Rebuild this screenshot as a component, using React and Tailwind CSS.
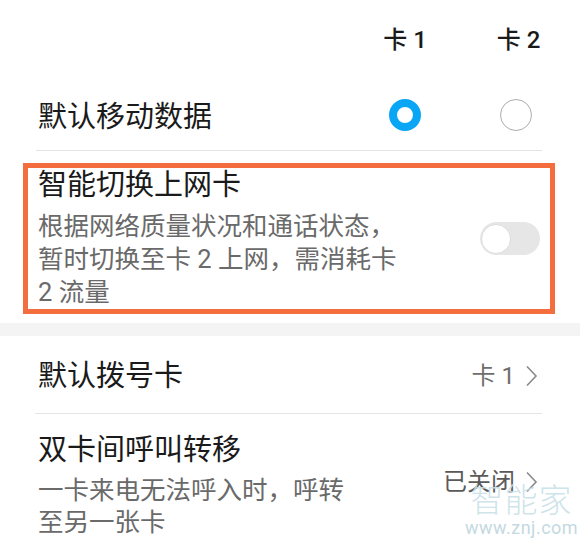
import React from 'react'

const font = { fontFamily: 'Roboto, "Noto Sans CJK SC", sans-serif' }

function Chevron() {
  return (
    <svg width="13" height="22" viewBox="0 0 13 22" className="shrink-0">
      <polyline points="2,1.5 11,11 2,20.5" fill="none" stroke="#8a8a8a" strokeWidth="1.6" />
    </svg>
  )
}

function Toggle() {
  return (
    <div className="relative w-[60px] h-[33px] rounded-full bg-[#e6e6e6] shrink-0">
      <div className="absolute left-[1px] top-[1.5px] w-[30px] h-[30px] rounded-full bg-white border border-[#dcdcdc]" />
    </div>
  )
}

export default function App() {
  return (
    <div className="relative w-[580px] h-[544px] overflow-hidden bg-white text-[#1a1a1a]" style={font}>
      {/* card header */}
      <div className="grid grid-cols-[1fr_72px_72px] gap-x-[39px] pl-[38px] pr-[28px] h-[80px] items-center">
        <span />
        <span className="text-center text-[24px] font-medium leading-none">卡 1</span>
        <span className="text-center text-[24px] font-medium leading-none pl-[5px]">卡 2</span>
      </div>

      {/* default data */}
      <div className="grid grid-cols-[1fr_72px_72px] gap-x-[39px] pl-[38px] pr-[28px] h-[70px] items-center">
        <span className="text-[29px] leading-[36px] pt-[4px]">默认移动数据</span>
        <div className="flex justify-center">
          <div className="w-[32px] h-[32px] rounded-full border-[8px] border-[#0aa6f6] bg-white" />
        </div>
        <div className="flex justify-center">
          <div className="w-[32px] h-[32px] rounded-full border-[1.5px] border-[#adadad] bg-white" />
        </div>
      </div>
      <div className="ml-[36px] mr-[38px] border-b border-[#e4e4e4]" />

      {/* smart switch, highlighted */}
      <div className="mt-[12px] ml-[23px] mr-[25px] border-[5px] border-[#f46d3e] flex items-center pl-[10px] pr-[10px]">
        <div className="flex-1">
          <div className="text-[29px] leading-[34px]">智能切换上网卡</div>
          <div className="mt-[8px] text-[25.5px] leading-[33px] text-[#6a6a6a] whitespace-nowrap">
            <div>根据网络质量状况和通话状态，</div>
            <div>暂时切换至卡 2 上网，需消耗卡</div>
            <div>2 流量</div>
          </div>
        </div>
        <Toggle />
      </div>

      <div className="mt-[9px] h-[13px] bg-[#f4f4f4]" />

      {/* default dial card */}
      <div className="flex items-center justify-between pl-[38px] pr-[42px] h-[77px] pt-[3px]">
        <span className="text-[29px] leading-[36px]">默认拨号卡</span>
        <div className="flex items-center gap-[10px] text-[24px] text-[#6e6e6e]">
          <span className="leading-none">卡 1</span>
          <Chevron />
        </div>
      </div>
      <div className="ml-[35px] mr-[38px] border-b border-[#e4e4e4]" />

      {/* call forwarding */}
      <div className="flex items-center justify-between pl-[38px] pr-[42px] pt-[18px]">
        <div>
          <div className="text-[29px] leading-[36px]">双卡间呼叫转移</div>
          <div className="mt-[6px] text-[25.5px] leading-[32px] text-[#6a6a6a] whitespace-nowrap">
            <div>一卡来电无法呼入时，呼转</div>
            <div>至另一张卡</div>
          </div>
        </div>
        <div className="flex items-center gap-[10px] text-[24px] text-[#5a5a5a] pb-[6px]">
          <span className="leading-none">已关闭</span>
          <Chevron />
        </div>
      </div>

      {/* watermark */}
      <div className="absolute left-[465px] top-[484px] flex flex-col items-center pointer-events-none">
        <span className="text-[33px] leading-[34px] tracking-[1px] font-light text-[#c9dfe7]/90">智能家</span>
        <span className="text-[18px] leading-[20px] tracking-[0.5px] text-[#c4d9e1]" style={{ fontFamily: 'Roboto, sans-serif' }}>www.znj.com</span>
      </div>
    </div>
  )
}
